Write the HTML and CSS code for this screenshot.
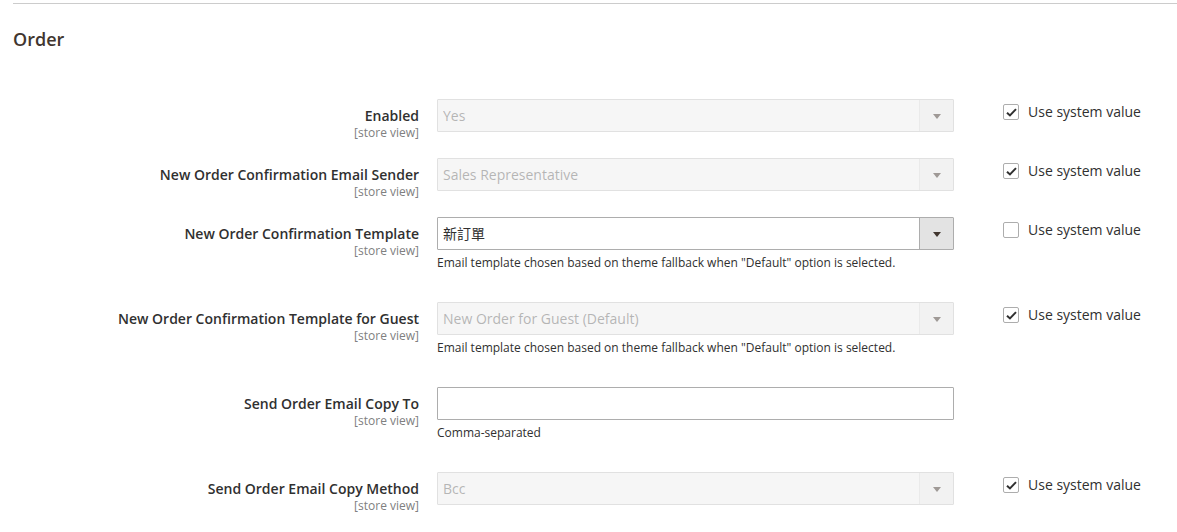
FILE: index.html
```
<!DOCTYPE html>
<html lang="en">
<head>
	<meta charset="UTF-8">
	<title>Order - Sales Emails</title>
	<link rel="stylesheet" href="styles.css">
</head>
<body>
	<div class="section">
		<h3 class="section-title">Order</h3>

		<div class="fieldset">
			<!-- Enabled -->
			<div class="field">
				<div class="label">
					<span>Enabled</span>
					<span class="scope">[store view]</span>
				</div>
				<div class="control">
					<div class="select-wrap disabled">
						<select disabled><option>Yes</option></select>
					</div>
				</div>
				<label class="use-default"><span class="checkbox checked"><svg viewBox="0 0 12 10" width="11" height="9"><path d="M1 5.2 L4.3 8.3 L11 1.3" fill="none" stroke="#303030" stroke-width="2.2"/></svg></span>Use system value</label>
			</div>

			<div class="field">
				<div class="label">
					<span>New Order Confirmation Email Sender</span>
					<span class="scope">[store view]</span>
				</div>
				<div class="control">
					<div class="select-wrap disabled">
						<select disabled><option>Sales Representative</option></select>
					</div>
				</div>
				<label class="use-default"><span class="checkbox checked"><svg viewBox="0 0 12 10" width="11" height="9"><path d="M1 5.2 L4.3 8.3 L11 1.3" fill="none" stroke="#303030" stroke-width="2.2"/></svg></span>Use system value</label>
			</div>

			<div class="field">
				<div class="label">
					<span>New Order Confirmation Template</span>
					<span class="scope">[store view]</span>
				</div>
				<div class="control">
					<div class="select-wrap">
						<select><option>新訂單</option></select>
					</div>
					<p class="note">Email template chosen based on theme fallback when "Default" option is selected.</p>
				</div>
				<label class="use-default"><span class="checkbox"></span>Use system value</label>
			</div>

			<div class="field">
				<div class="label">
					<span>New Order Confirmation Template for Guest</span>
					<span class="scope">[store view]</span>
				</div>
				<div class="control">
					<div class="select-wrap disabled">
						<select disabled><option>New Order for Guest (Default)</option></select>
					</div>
					<p class="note">Email template chosen based on theme fallback when "Default" option is selected.</p>
				</div>
				<label class="use-default"><span class="checkbox checked"><svg viewBox="0 0 12 10" width="11" height="9"><path d="M1 5.2 L4.3 8.3 L11 1.3" fill="none" stroke="#303030" stroke-width="2.2"/></svg></span>Use system value</label>
			</div>

			<div class="field">
				<div class="label">
					<span>Send Order Email Copy To</span>
					<span class="scope">[store view]</span>
				</div>
				<div class="control">
					<input type="text" class="input-text">
					<p class="note">Comma-separated</p>
				</div>
				<div></div>
			</div>

			<div class="field">
				<div class="label">
					<span>Send Order Email Copy Method</span>
					<span class="scope">[store view]</span>
				</div>
				<div class="control">
					<div class="select-wrap disabled">
						<select disabled><option>Bcc</option></select>
					</div>
				</div>
				<label class="use-default"><span class="checkbox checked"><svg viewBox="0 0 12 10" width="11" height="9"><path d="M1 5.2 L4.3 8.3 L11 1.3" fill="none" stroke="#303030" stroke-width="2.2"/></svg></span>Use system value</label>
			</div>
		</div>
	</div>
</body>
</html>
```

FILE: styles.css
```
*{margin:0;padding:0;box-sizing:border-box}
body{
	font-family:"Open Sans", "Noto Sans CJK TC", sans-serif;
	color:#303030;
	background:#fff;
	width:1177px;
	overflow:hidden;
}
.section{
	padding-top:3px;
}
.section-title{
	margin-left:13px;
	border-top:1px solid #cccccc;
	padding-top:23px;
	font-size:18px;
	line-height:24px;
	font-weight:600;
	color:#41362f;
}
.fieldset{
	padding-top:48px;
}
.field{
	display:grid;
	grid-template-columns:419px 517px 1fr;
	column-gap:18px;
	align-items:start;
	margin-bottom:26px;
}
.label{
	text-align:right;
	padding-top:7px;
	margin-bottom:-10px;   /* scope line hangs below the control row */
	font-size:14px;
	line-height:20px;
	font-weight:600;
	color:#303030;
}
.label span{display:block}
.label .scope{
	font-size:12px;
	line-height:14px;
	font-weight:400;
	color:#808080;
}

/* select */
.select-wrap{
	position:relative;
	height:33px;
}
.select-wrap select{
	-webkit-appearance:none;
	appearance:none;
	width:100%;
	height:33px;
	border:1px solid #adadad;
	border-radius:1px;
	background:#fff;
	padding:0 40px 0 5px;
	font-family:"Open Sans", "Noto Sans CJK TC", sans-serif;
	font-size:14px;
	color:#303030;
	outline:none;
}
.select-wrap::before{
	content:"";
	position:absolute;
	right:1px;
	top:1px;
	bottom:1px;
	width:33px;
	background:#e3e3e3;
	border-left:1px solid #adadad;
	pointer-events:none;
}
.select-wrap::after{
	content:"";
	position:absolute;
	right:13px;
	top:15px;
	border-left:4px solid transparent;
	border-right:4px solid transparent;
	border-top:5px solid #41362f;
	pointer-events:none;
}
.select-wrap.disabled{opacity:.5}
.select-wrap.disabled select{background:#e9e9e9}

.input-text{
	display:block;
	width:100%;
	height:33px;
	border:1px solid #adadad;
	border-radius:1px;
	background:#fff;
	padding:0 5px;
	font-family:inherit;
	font-size:14px;
	outline:none;
}
.note{
	margin-top:4px;
	padding-bottom:4px;
	font-size:12px;
	line-height:18px;
	color:#303030;
}

/* use system value */
.use-default{
	display:flex;
	align-items:center;
	margin-left:31px;
	margin-top:5px;
	font-size:14px;
	line-height:16px;
	color:#303030;
}
.checkbox{
	width:16px;
	height:16px;
	margin-right:9px;
	border:1px solid #adadad;
	border-radius:2px;
	background:#fff;
	display:flex;
	align-items:center;
	justify-content:center;
}
.checkbox svg{display:block}
```
